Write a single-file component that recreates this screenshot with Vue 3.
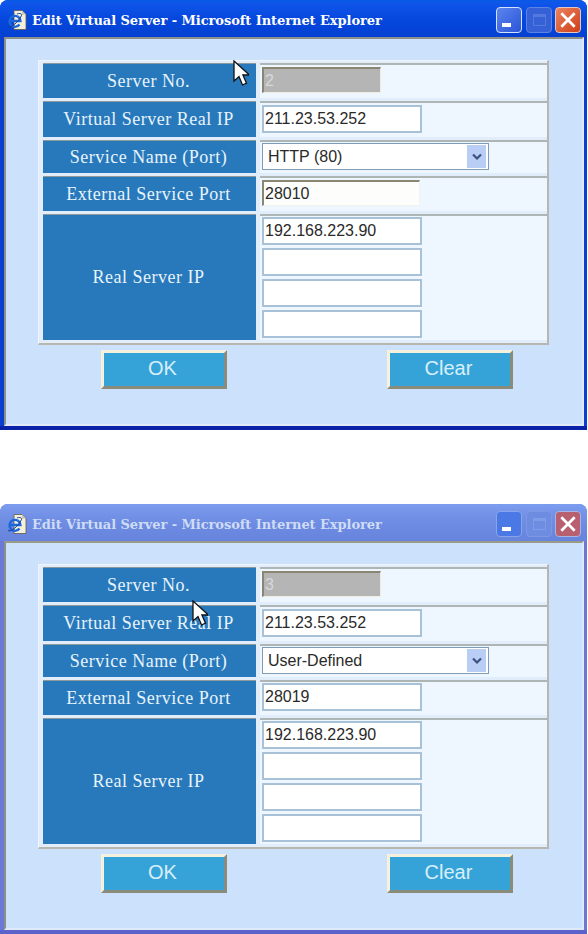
<script setup>
const windows = [
  { id: 1, active: true, no: '2', service: 'HTTP (80)', port: '28010', portFocus: true, cursor: 'cursor-a' },
  { id: 2, active: false, no: '3', service: 'User-Defined', port: '28019', portFocus: false, cursor: 'cursor-b' }
]
</script>

<template>
  <div class="page">
    <section v-for="w in windows" :key="w.id" class="win" :class="{ inactive: !w.active }">
      <header class="titlebar">
        <svg class="ie" viewBox="0 0 20 20" width="20" height="20">
          <path d="M7 0.500h8l4 4v15H7z" fill="#f3efdc" stroke="#5f5c4c" stroke-width=".8" />
          <path d="M15 .5v4h4" fill="#c9c5ae" />
          <path d="M3 11H13.500A5.500 5.500 0 1 0 12.500 14.500" fill="none" stroke="#1c67dc" stroke-width="2.300" />
          <path d="M1 16.500c2 2 10-3.500 13.500-11 .8-2-2-2.500-4.500-1.500" fill="none" stroke="#123f9c" stroke-width="1" />
        </svg>
        <span class="title">Edit Virtual Server - Microsoft Internet Explorer</span>
        <div class="controls">
          <span class="ctl ctl-min"><i></i></span>
          <span class="ctl ctl-max"><i></i></span>
          <span class="ctl ctl-close">
            <svg viewBox="0 0 14 14" width="16" height="16">
              <path d="M2 2l10 10M12 2L2 12" stroke="#fff" stroke-width="2.400" stroke-linecap="square" />
            </svg>
          </span>
        </div>
      </header>

      <div class="body">
        <div class="table">
          <div class="label">Server No.</div>
          <div class="value">
            <input class="field disabled" :value="w.no" disabled />
          </div>
          <div class="label">Virtual Server Real IP</div>
          <div class="value">
            <input class="field" value="211.23.53.252" />
          </div>
          <div class="label">Service Name (Port)</div>
          <div class="value tight">
            <div class="select">
              <span>{{ w.service }}</span>
              <b class="arrow">
                <svg viewBox="0 0 12 10" width="12" height="10">
                  <path d="M2 2.500l4 4 4-4" fill="none" stroke="#3d4f80" stroke-width="2.200" />
                </svg>
              </b>
            </div>
          </div>
          <div class="label">External Service Port</div>
          <div class="value tight">
            <input class="field" :class="{ focus: w.portFocus }" :value="w.port" />
          </div>
          <div class="label">Real Server IP</div>
          <div class="value tight stack">
            <input class="field" value="192.168.223.90" />
            <input class="field" />
            <input class="field" />
            <input class="field" />
          </div>
        </div>
        <div class="buttons">
          <button class="btn">OK</button>
          <button class="btn">Clear</button>
        </div>
      </div>

      <svg class="cursor" :class="w.cursor" viewBox="0 0 16 27" width="16" height="27">
        <path d="M1 1v20l5-4.500 3.500 8.500 4-1.800-3.600-8.200h6.600z" fill="#fff" stroke="#111" stroke-width="1.300" />
      </svg>
    </section>
  </div>
</template>

<style scoped>
.page {
  width: 588px;
  height: 934px;
  overflow: hidden;
  background: #fff;
  display: flex;
  flex-direction: column;
  gap: 74px;
}

.win {
  position: relative;
  width: 587px;
  height: 430px;
  box-sizing: border-box;
  flex: none;
  display: flex;
  flex-direction: column;
  border-radius: 8px 8px 0 0;
  background: #0a3fd0;
  border-bottom: 4px solid #0a22a8;
}

.win.inactive {
  background: #6a78d8;
  border-bottom-color: #5c62cc;
}

.titlebar {
  height: 37px;
  box-sizing: border-box;
  flex: none;
  display: flex;
  align-items: center;
  padding: 3px 6px 0 7px;
  border-radius: 8px 8px 0 0;
  background: linear-gradient(#0a5ae6 0, #0f55ea 10%, #0546dc 55%, #0441d2 100%);
}

.inactive .titlebar {
  background: linear-gradient(#7d9df0 0, #6f8ee4 40%, #6784dc 100%);
}

.ie {
  flex: none;
}

.title {
  margin-left: 5px;
  color: #fff;
  font: bold 13px "DejaVu Serif", serif;
  letter-spacing: -.07px;
  white-space: nowrap;
  flex: 1;
}

.inactive .title {
  color: #cfdcf5;
}

.controls {
  display: flex;
  gap: 3px;
}

.ctl {
  width: 26px;
  height: 26px;
  box-sizing: border-box;
  border-radius: 4px;
  border: 1px solid #d5e2fb;
  display: flex;
  align-items: center;
  justify-content: center;
  position: relative;
}

.ctl-min {
  background: linear-gradient(135deg, #5a85ee, #2b55d8);
}

.ctl-min i {
  position: absolute;
  left: 5px;
  bottom: 5px;
  width: 9px;
  height: 4px;
  background: #fff;
}

.ctl-max {
  margin-left: 1px;
  background: #3560d6;
  border-color: #5d83e4;
}

.ctl-max i {
  width: 13px;
  height: 12px;
  box-sizing: border-box;
  border: 1px solid #5479de;
  border-top-width: 3px;
}

.ctl-close {
  background: linear-gradient(135deg, #ea8460, #cf3f18);
  border-color: #e8c8bc;
}

.inactive .ctl-min {
  background: #4a78e4;
  border-color: #8aa4ea;
}

.inactive .ctl-max {
  background: #6e8ce0;
  border-color: #7c98e4;
}

.inactive .ctl-max i {
  border-color: #7f9ce8;
}

.inactive .ctl-close {
  background: #b86070;
  border-color: #a8b4e4;
}

.body {
  flex: 1;
  margin: 0 3px 0 4px;
  padding: 21px 0 0 32px;
  border: 2px solid #dfe9f7;
  border-top-color: #8e8f88;
  border-left-color: #8e8f88;
  background: #cce1fc;
}

.inactive .body {
  border-top-color: #9a9a88;
}

.table {
  width: 511px;
  box-sizing: border-box;
  display: grid;
  grid-template-columns: 213px 287px;
  grid-template-rows: 35px 36px 33px 35px 126px;
  column-gap: 4px;
  row-gap: 3px;
  padding: 2px 2px 3px 4px;
  background: #e1edfb;
  border-right: 2px solid #b7b7ae;
  border-bottom: 2px solid #b7b7ae;
  border-top: 1px solid #eef5fd;
  border-left: 1px solid #eef5fd;
}

.label {
  background: #2779bb;
  border-top: 1px solid #8d9a9c;
  color: #e8f3fb;
  font: 18px "Liberation Serif", serif;
  letter-spacing: .5px;
  padding-right: 2px;
  display: flex;
  align-items: center;
  justify-content: center;
  white-space: nowrap;
}

.value {
  background: #eef6ff;
  border-top: 2px solid #adb6b4;
  padding: 2px 0 0 2px;
  display: flex;
  align-items: flex-start;
  box-sizing: border-box;
}

.value.tight {
  padding-top: 1px;
}

.stack {
  flex-direction: column;
  gap: 3px;
}

.field {
  width: 160px;
  height: 28px;
  box-sizing: border-box;
  padding: 0 1px;
  border: 2px solid #a9c1d6;
  background: #fff;
  color: #2a2a2a;
  font: 16px "Liberation Sans", sans-serif;
  outline: none;
  border-radius: 0;
  margin: 0;
}

.field.disabled {
  width: 119px;
  height: 26px;
  background: #b5b5b5;
  color: #d8d8d8;
  border: solid #f0ecdf;
  border-width: 0 1px 1px 0;
  border-top: 2px solid #8a8672;
  border-left: 2px solid #8a8672;
}

.field.focus {
  width: 158px;
  height: 26px;
  margin-top: 1px;
  background: #fdfdfb;
  border: 0 solid #f2f3ee;
  border-width: 0 1px 1px 0;
  border-top: 2px solid #8a8672;
  border-left: 2px solid #8a8672;
}

.select {
  width: 227px;
  height: 27px;
  box-sizing: border-box;
  border: 1px solid #7f9db9;
  background: #fff;
  display: flex;
  align-items: center;
  justify-content: space-between;
  padding: 0 2px 0 5px;
  color: #2a2a2a;
  font: 16px "Liberation Sans", sans-serif;
}

.arrow {
  width: 19px;
  height: 23px;
  background: #b9cef5;
  display: flex;
  align-items: center;
  justify-content: center;
}

.buttons {
  display: flex;
  gap: 160px;
  margin: 5px 0 0 63px;
}

.btn {
  width: 126px;
  height: 39px;
  box-sizing: border-box;
  background: #36a3d8;
  color: #d8eff9;
  font: 20px "Liberation Sans", sans-serif;
  border: 3px solid;
  border-color: #f6f1dc #8b8b7c #8b8b7c #f6f1dc;
  padding: 0 3px 2px 0;
}

/* the mouse pointer lying over the shot */
.cursor {
  position: absolute;
}

.cursor-a {
  left: 233px;
  top: 60px;
}

.cursor-b {
  left: 192px;
  top: 96px;
}
</style>

<style>
body {
  background: #fff;
}
</style>
